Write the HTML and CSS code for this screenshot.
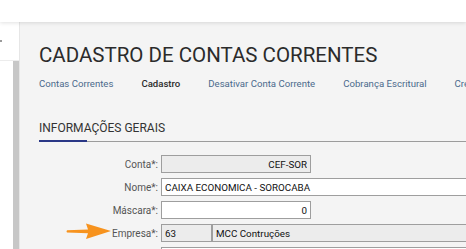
FILE: index.html
```html
<!doctype html>
<html lang="pt-BR">
  <head>
    <meta charset="UTF-8" />
    <meta name="viewport" content="width=device-width, initial-scale=1.0" />
    <title>Cadastro de Contas Correntes</title>
    <link rel="stylesheet" href="styles.css">
  </head>
  <body>
    <div class="topbar"></div>
    <div class="layout">
      <aside class="sidebar">
        <div class="side-top"><span class="side-mark"></span></div>
        <div class="side-rail"></div>
      </aside>
      <main class="main">
        <h1 class="title">CADASTRO DE CONTAS CORRENTES</h1>
        <nav class="tabs">
          <a class="tab">Contas Correntes</a>
          <span class="sep"></span>
          <a class="tab active">Cadastro</a>
          <span class="sep"></span>
          <a class="tab">Desativar Conta Corrente</a>
          <span class="sep"></span>
          <a class="tab">Cobrança Escritural</a>
          <span class="sep"></span>
          <a class="tab">Crédito</a>
        </nav>

        <h2 class="section-title">INFORMAÇÕES GERAIS</h2>
        <div class="rule"><span class="rule-accent"></span><span class="rule-line"></span></div>

        <form class="form">
          <label class="label">Conta*:</label>
          <div class="field"><input class="input short disabled right" value="CEF-SOR" readonly></div>

          <label class="label">Nome*:</label>
          <div class="field"><input class="input long" value="CAIXA ECONOMICA - SOROCABA"></div>

          <label class="label">Máscara*:</label>
          <div class="field"><input class="input short right" value="0"></div>

          <label class="label">Empresa*:</label>
          <div class="field">
            <input class="input code disabled" value="63" readonly>
            <input class="input long disabled" value="MCC Contruções" readonly>
          </div>

          <label class="label"></label>
          <div class="field"><input class="input long" value=""></div>

          <svg class="arrow" width="46" height="17" viewBox="0 0 46 17">
            <path d="M1 7.2 L22 6.4 L20 0.5 L45 8 L20 16 L22 10.2 L1 9.6 Q0 8.4 1 7.2 Z" fill="#f7931e"/>
          </svg>
        </form>
      </main>
    </div>
  </body>
</html>
```

FILE: styles.css
```css
html,
body {
  margin: 0;
  padding: 0;
  height: 100%;
  overflow: hidden;
}
body {
  font-family: Roboto, "Liberation Sans", sans-serif;
  color: #333333;
  background-color: #f4f4f4;
}

.topbar {
  height: 22px;
  background-color: #ffffff;
  box-shadow: 0 1px 4px rgba(0, 0, 0, 0.12);
  position: relative;
  z-index: 2;
}

.layout {
  display: flex;
  height: calc(100% - 22px);
}

.sidebar {
  width: 19px;
  flex-shrink: 0;
  display: flex;
  flex-direction: column;
  background-color: #ffffff;
  border-right: 1px solid #e6e6e6;
}
.side-top {
  height: 38px;
  border-bottom: 1px solid #ececec;
  display: flex;
  align-items: center;
}
.side-mark {
  width: 2px;
  height: 2px;
  background-color: #9a9a9a;
}
.side-rail {
  flex: 1;
  margin-left: 13px;
  background-color: #c7c7c7;
}

.main {
  flex: 1;
  min-width: 0;
  padding-left: 19px;
  overflow: hidden;
}

.title {
  margin: 22px 0 0 0;
  font-size: 20.5px;
  line-height: 22px;
  font-weight: 400;
  color: #2b2b2b;
  white-space: nowrap;
}

.tabs {
  margin-top: 11px;
  display: flex;
  align-items: center;
  gap: 14px;
  white-space: nowrap;
  font-size: 9.6px;
  line-height: 14px;
}
.tab {
  color: #4b6a8c;
}
.tab.active {
  color: #2b2b2b;
  font-weight: 500;
}
.sep {
  width: 1px;
  height: 8px;
  background-color: #dcdcdc;
}

.section-title {
  margin: 29px 0 0 0;
  font-size: 12px;
  line-height: 16px;
  font-weight: 400;
  color: #333333;
}
.rule {
  margin-top: 4px;
  display: flex;
  align-items: flex-end;
}
.rule-accent {
  width: 48px;
  height: 2px;
  background-color: #2a3786;
}
.rule-line {
  flex: 1;
  height: 1px;
  background-color: #9c9c9c;
}

.form {
  position: relative;
  margin-top: 13px;
  display: grid;
  grid-template-columns: 119px 1fr;
  column-gap: 3px;
  row-gap: 5px;
  align-items: center;
}
.label {
  text-align: right;
  font-size: 10px;
  color: #555555;
  white-space: nowrap;
}
.field {
  display: flex;
  height: 18px;
}
.input {
  box-sizing: border-box;
  height: 18px;
  margin: 0;
  padding: 0 3px;
  border: 1px solid #9e9e9e;
  border-radius: 0;
  background-color: #ffffff;
  font-family: Roboto, "Liberation Sans", sans-serif;
  font-size: 9.8px;
  color: #111111;
  outline: none;
}
.input.short {
  width: 150px;
}
.input.long {
  width: 420px;
  flex-shrink: 0;
}
.input.code {
  width: 51px;
}
.input.disabled {
  background-color: #ececec;
}
.input.right {
  text-align: right;
}

.arrow {
  position: absolute;
  left: 27px;
  top: 68px;
}
```
